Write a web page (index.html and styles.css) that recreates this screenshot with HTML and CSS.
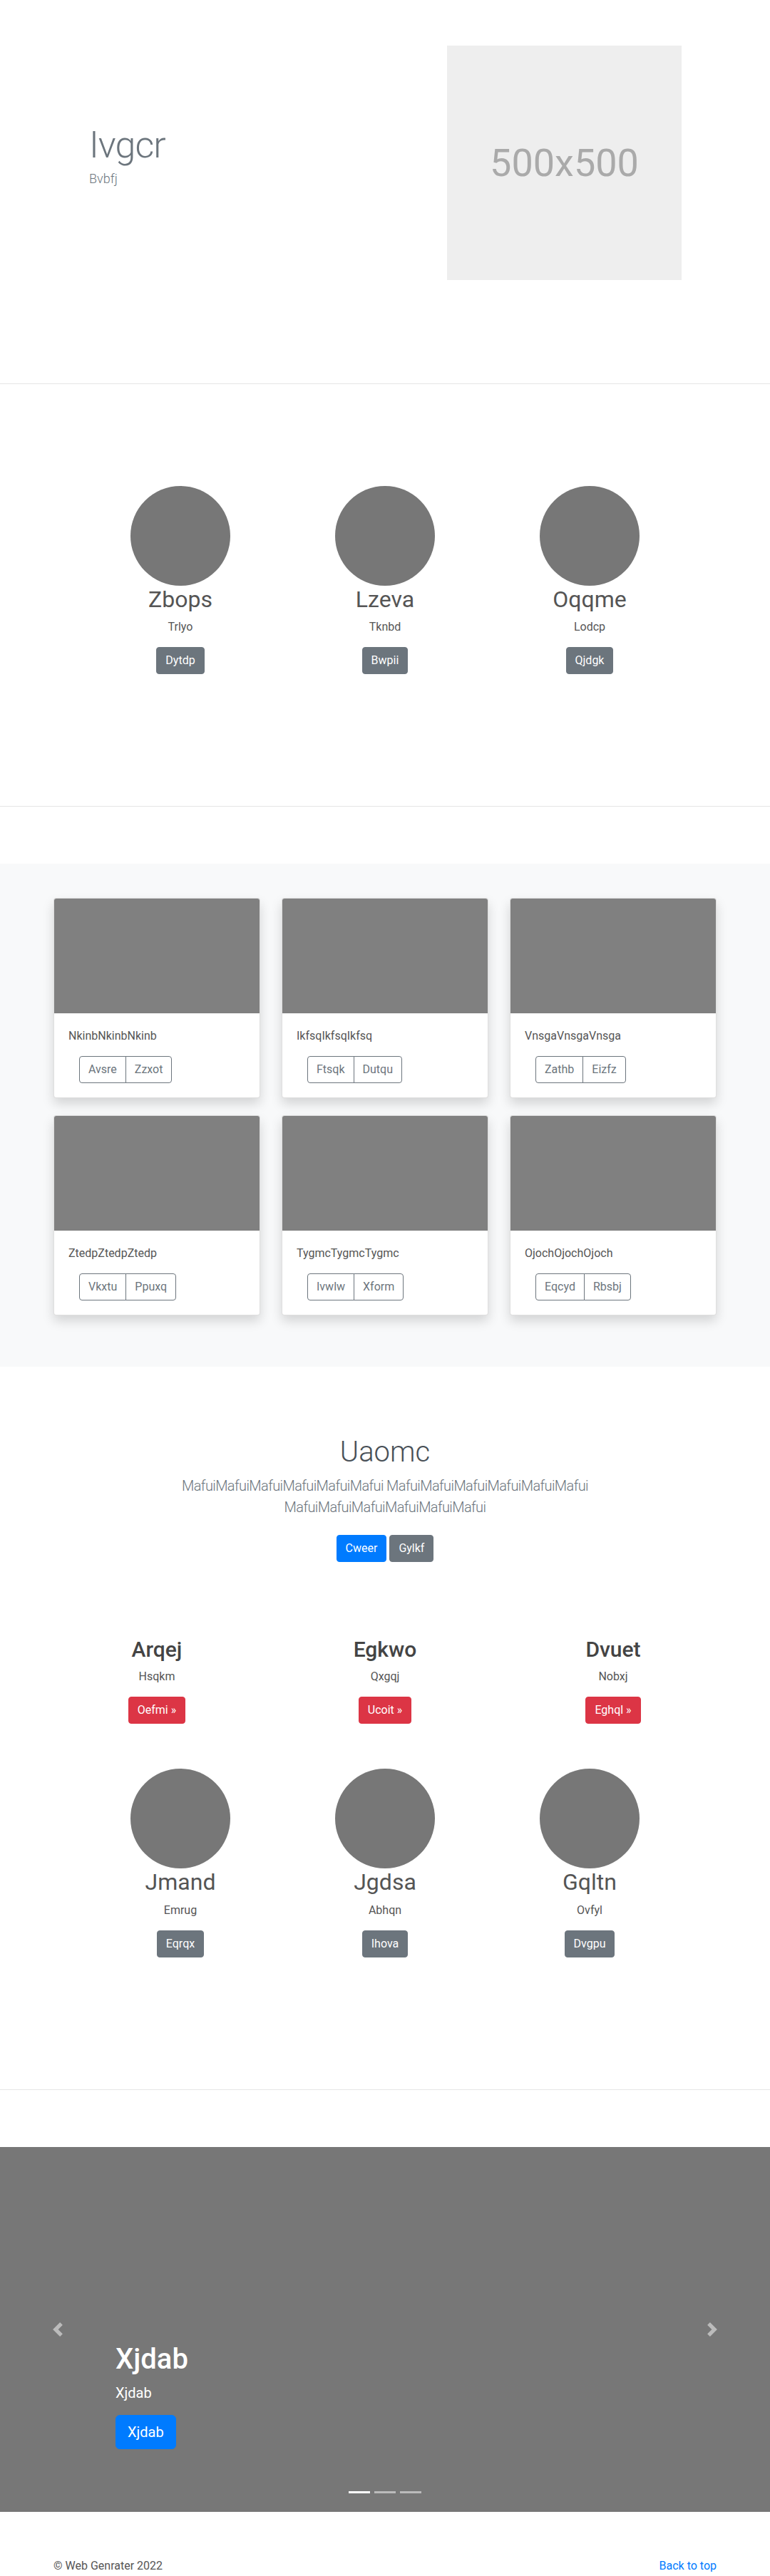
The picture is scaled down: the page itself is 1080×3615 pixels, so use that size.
FILE: index.html
```html
<!DOCTYPE html>
<html lang="en">
<head>
<meta charset="utf-8">
<title>Ivgcr</title>
<link rel="stylesheet" href="styles.css">
</head>
<body>
<header class="hero">
  <div class="hero-text">
    <h1 class="hero-title">Ivgcr</h1>
    <p class="hero-sub">Bvbfj</p>
  </div>
  <div class="hero-img">500x500</div>
</header>

<hr class="divider">

<section class="team">
  <div class="team-grid">
    <div class="member">
      <div class="avatar"></div>
      <h2 class="member-name">Zbops</h2>
      <p class="member-role">Trlyo</p>
      <p class="member-action"><a class="btn btn-secondary" href="#">Dytdp</a></p>
    </div>
    <div class="member">
      <div class="avatar"></div>
      <h2 class="member-name">Lzeva</h2>
      <p class="member-role">Tknbd</p>
      <p class="member-action"><a class="btn btn-secondary" href="#">Bwpii</a></p>
    </div>
    <div class="member">
      <div class="avatar"></div>
      <h2 class="member-name">Oqqme</h2>
      <p class="member-role">Lodcp</p>
      <p class="member-action"><a class="btn btn-secondary" href="#">Qjdgk</a></p>
    </div>
  </div>
</section>

<hr class="divider">

<section class="album">
  <div class="album-grid">
    <div class="card">
      <div class="card-img"></div>
      <div class="card-body">
        <p class="card-text">NkinbNkinbNkinb</p>
        <div class="btn-group"><a class="btn btn-outline" href="#">Avsre</a><a class="btn btn-outline" href="#">Zzxot</a></div>
      </div>
    </div>
    <div class="card">
      <div class="card-img"></div>
      <div class="card-body">
        <p class="card-text">IkfsqIkfsqIkfsq</p>
        <div class="btn-group"><a class="btn btn-outline" href="#">Ftsqk</a><a class="btn btn-outline" href="#">Dutqu</a></div>
      </div>
    </div>
    <div class="card">
      <div class="card-img"></div>
      <div class="card-body">
        <p class="card-text">VnsgaVnsgaVnsga</p>
        <div class="btn-group"><a class="btn btn-outline" href="#">Zathb</a><a class="btn btn-outline" href="#">Eizfz</a></div>
      </div>
    </div>
    <div class="card">
      <div class="card-img"></div>
      <div class="card-body">
        <p class="card-text">ZtedpZtedpZtedp</p>
        <div class="btn-group"><a class="btn btn-outline" href="#">Vkxtu</a><a class="btn btn-outline" href="#">Ppuxq</a></div>
      </div>
    </div>
    <div class="card">
      <div class="card-img"></div>
      <div class="card-body">
        <p class="card-text">TygmcTygmcTygmc</p>
        <div class="btn-group"><a class="btn btn-outline" href="#">Ivwlw</a><a class="btn btn-outline" href="#">Xform</a></div>
      </div>
    </div>
    <div class="card">
      <div class="card-img"></div>
      <div class="card-body">
        <p class="card-text">OjochOjochOjoch</p>
        <div class="btn-group"><a class="btn btn-outline" href="#">Eqcyd</a><a class="btn btn-outline" href="#">Rbsbj</a></div>
      </div>
    </div>
  </div>
</section>

<section class="intro">
  <div class="intro-inner">
    <h1 class="intro-title">Uaomc</h1>
    <p class="intro-lead">MafuiMafuiMafuiMafuiMafuiMafui MafuiMafuiMafuiMafuiMafuiMafui MafuiMafuiMafuiMafuiMafuiMafui</p>
    <div class="intro-actions">
      <a class="btn btn-primary" href="#">Cweer</a>
      <a class="btn btn-secondary" href="#">Gylkf</a>
    </div>
  </div>
</section>

<section class="features">
  <div class="features-grid">
    <div class="feature">
      <h2 class="feature-title">Arqej</h2>
      <p class="feature-text">Hsqkm</p>
      <p class="feature-action"><a class="btn btn-danger" href="#">Oefmi &raquo;</a></p>
    </div>
    <div class="feature">
      <h2 class="feature-title">Egkwo</h2>
      <p class="feature-text">Qxgqj</p>
      <p class="feature-action"><a class="btn btn-danger" href="#">Ucoit &raquo;</a></p>
    </div>
    <div class="feature">
      <h2 class="feature-title">Dvuet</h2>
      <p class="feature-text">Nobxj</p>
      <p class="feature-action"><a class="btn btn-danger" href="#">Eghql &raquo;</a></p>
    </div>
  </div>
</section>

<section class="team">
  <div class="team-grid">
    <div class="member">
      <div class="avatar"></div>
      <h2 class="member-name">Jmand</h2>
      <p class="member-role">Emrug</p>
      <p class="member-action"><a class="btn btn-secondary" href="#">Eqrqx</a></p>
    </div>
    <div class="member">
      <div class="avatar"></div>
      <h2 class="member-name">Jgdsa</h2>
      <p class="member-role">Abhqn</p>
      <p class="member-action"><a class="btn btn-secondary" href="#">Ihova</a></p>
    </div>
    <div class="member">
      <div class="avatar"></div>
      <h2 class="member-name">Gqltn</h2>
      <p class="member-role">Ovfyl</p>
      <p class="member-action"><a class="btn btn-secondary" href="#">Dvgpu</a></p>
    </div>
  </div>
</section>

<hr class="divider">

<div class="carousel">
  <div class="carousel-caption">
    <h1 class="caption-title">Xjdab</h1>
    <p class="caption-text">Xjdab</p>
    <p class="caption-action"><a class="btn btn-lg btn-primary" href="#">Xjdab</a></p>
  </div>
  <a class="control control-prev" href="#">
    <svg viewBox="0 0 8 8" fill="#fff"><path d="M5.25 0l-4 4 4 4 1.5-1.5L4.25 4l2.5-2.5L5.25 0z"/></svg>
  </a>
  <a class="control control-next" href="#">
    <svg viewBox="0 0 8 8" fill="#fff"><path d="M2.75 0l-1.5 1.5L3.75 4l-2.5 2.5L2.75 8l4-4-4-4z"/></svg>
  </a>
  <ol class="indicators">
    <li class="active"></li>
    <li></li>
    <li></li>
  </ol>
</div>

<footer class="footer">
  <p>&copy; Web Genrater 2022</p>
  <p><a href="#">Back to top</a></p>
</footer>
</body>
</html>
```

FILE: styles.css
```css
* {
  box-sizing: border-box;
}

body {
  margin: 0;
  font-family: Roboto, "Liberation Sans", Arial, sans-serif;
  font-size: 16px;
  line-height: 1.5;
  color: #212529;
  background: #fff;
}

h1, h2, p {
  margin: 0;
}

a {
  text-decoration: none;
}

.divider {
  margin: 80px 0;
  height: 0;
  border: 0;
  border-top: 1px solid rgba(0, 0, 0, 0.1);
}

/* Hero */
.hero {
  display: grid;
  grid-template-columns: 502px 329px;
  padding: 64px 0 65px 125px;
}

.hero-text {
  padding-top: 109px;
}

.hero-title {
  font-size: 52px;
  font-weight: 300;
  line-height: 1.2;
  color: #6c757d;
  margin-bottom: 2px;
  letter-spacing: -1px;
}

.hero-sub {
  font-size: 18px;
  font-weight: 300;
  line-height: 1.5;
  color: #6c757d;
}

.hero-img {
  width: 329px;
  height: 329px;
  background: #eee;
  color: #aaa;
  display: flex;
  align-items: center;
  justify-content: center;
  font-size: 54px;
}

/* Buttons */
.btn {
  display: inline-block;
  padding: 6px 12px;
  font-size: 16px;
  line-height: 24px;
  font-weight: 400;
  border: 1px solid transparent;
  border-radius: 4px;
  white-space: nowrap;
}

.btn-secondary {
  background: #6c757d;
  border-color: #6c757d;
  color: #fff;
}

.btn-primary {
  background: #007bff;
  border-color: #007bff;
  color: #fff;
}

.btn-danger {
  background: #dc3545;
  border-color: #dc3545;
  color: #fff;
}

.btn-outline {
  background: transparent;
  border-color: #6c757d;
  color: #6c757d;
}

.btn-lg {
  padding: 8px 16px;
  font-size: 20px;
  line-height: 30px;
  border-radius: 6px;
}

/* Team */
.team {
  padding: 63px 0 65px;
}

.team-grid {
  display: grid;
  grid-template-columns: repeat(3, 287px);
  justify-content: center;
}

.member {
  text-align: center;
  margin-bottom: 24px;
}

.avatar {
  width: 140px;
  height: 140px;
  border-radius: 50%;
  background: #777;
  margin: 0 auto;
}

.member-name {
  font-size: 32px;
  font-weight: 400;
  line-height: 1.2;
  color: #555;
  margin-bottom: 8px;
}

.member-role {
  color: #555;
  margin: 0 12px 16px;
}

.member-action {
  display: flex;
  justify-content: center;
  margin-bottom: 16px;
}

/* Album */
.album {
  background: #f8f9fa;
  padding: 48px 0 72px;
}

.album-grid {
  width: 930px;
  margin: 0 auto;
  display: grid;
  grid-template-columns: repeat(3, 290px);
  gap: 24px 30px;
}

.card {
  background: #fff;
  border: 1px solid rgba(0, 0, 0, 0.125);
  border-radius: 4px;
  box-shadow: 0 8px 16px rgba(0, 0, 0, 0.15);
  overflow: hidden;
}

.card-img {
  height: 161px;
  background: #808080;
}

.card-body {
  padding: 20px;
}

.card-text {
  color: #555;
  margin-bottom: 16px;
}

.btn-group {
  display: inline-flex;
  margin-left: 15px;
}

.btn-group .btn:first-child {
  border-top-right-radius: 0;
  border-bottom-right-radius: 0;
}

.btn-group .btn + .btn {
  margin-left: -1px;
  border-top-left-radius: 0;
  border-bottom-left-radius: 0;
}

/* Intro */
.intro {
  text-align: center;
  padding: 96px 0 48px;
}

.intro-inner {
  width: 700px;
  margin: 0 auto;
}

.intro-title {
  font-size: 40px;
  font-weight: 300;
  line-height: 1.2;
  color: #495057;
  margin-bottom: 8px;
}

.intro-lead {
  font-size: 20px;
  font-weight: 300;
  line-height: 1.5;
  color: #6c757d;
  margin-bottom: 16px;
  letter-spacing: -0.6px;
}

.intro-actions {
  display: flex;
  justify-content: center;
  gap: 4px;
  padding: 8px 0;
}

/* Features */
.features {
  padding-top: 49px;
}

.features-grid {
  width: 960px;
  margin: 0 auto;
  display: grid;
  grid-template-columns: repeat(3, 1fr);
}

.feature {
  text-align: center;
  padding: 0 15px;
}

.feature-title {
  font-size: 30px;
  font-weight: 500;
  line-height: 1.2;
  color: #444;
  margin-bottom: 8px;
}

.feature-text {
  color: #555;
  margin-bottom: 16px;
}

.feature-action {
  display: flex;
  justify-content: center;
}

/* Carousel */
.carousel {
  position: relative;
  height: 512px;
  background: #777;
  margin-bottom: 64px;
}

.carousel-caption {
  position: absolute;
  left: 15%;
  right: 15%;
  bottom: 52px;
  padding: 20px 0;
  color: #fff;
  z-index: 10;
}

.caption-title {
  font-size: 40px;
  font-weight: 500;
  line-height: 1.2;
  margin-bottom: 8px;
}

.caption-text {
  font-size: 20px;
  line-height: 30px;
  margin-bottom: 16px;
}

.caption-action {
  display: flex;
  margin-bottom: 16px;
}

.control {
  position: absolute;
  top: 0;
  bottom: 0;
  width: 15%;
  display: flex;
  align-items: center;
  justify-content: center;
  opacity: 0.5;
}

.control-prev {
  left: 0;
}

.control-next {
  right: 0;
}

.control svg {
  width: 20px;
  height: 20px;
}

.indicators {
  position: absolute;
  left: 15%;
  right: 15%;
  bottom: 26px;
  display: flex;
  justify-content: center;
  gap: 6px;
  margin: 0;
  padding: 0;
  list-style: none;
  z-index: 15;
}

.indicators li {
  width: 30px;
  height: 3px;
  background: rgba(255, 255, 255, 0.5);
}

.indicators li.active {
  background: #fff;
}

/* Footer */
.footer {
  width: 930px;
  margin: 0 auto;
  display: flex;
  justify-content: space-between;
  color: #555;
}

.footer a {
  color: #007bff;
}
```
